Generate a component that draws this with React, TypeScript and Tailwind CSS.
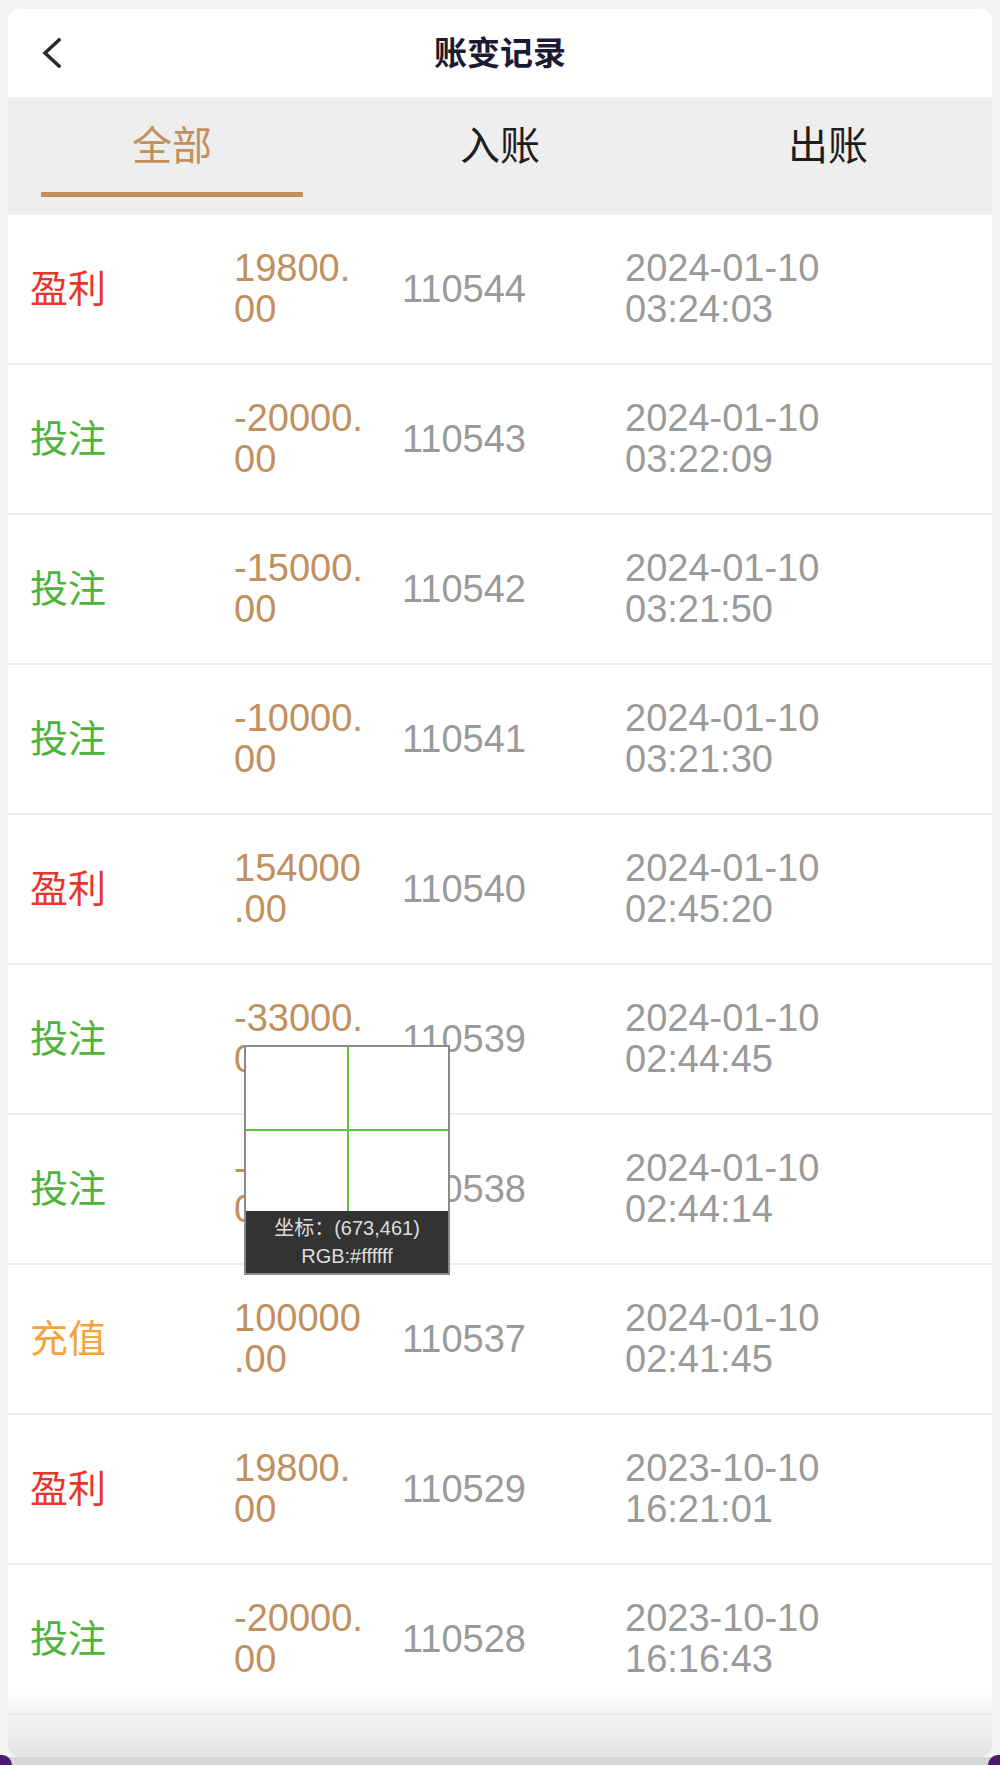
import React from "react";

type Record = {
	kind: string;
	amount: string;
	id: string;
	time: string;
};

const records: Record[] = [
	{ kind: "盈利", amount: "19800.00", id: "110544", time: "2024-01-10 03:24:03" },
	{ kind: "投注", amount: "-20000.00", id: "110543", time: "2024-01-10 03:22:09" },
	{ kind: "投注", amount: "-15000.00", id: "110542", time: "2024-01-10 03:21:50" },
	{ kind: "投注", amount: "-10000.00", id: "110541", time: "2024-01-10 03:21:30" },
	{ kind: "盈利", amount: "154000.00", id: "110540", time: "2024-01-10 02:45:20" },
	{ kind: "投注", amount: "-33000.00", id: "110539", time: "2024-01-10 02:44:45" },
	{ kind: "投注", amount: "-20000.00", id: "110538", time: "2024-01-10 02:44:14" },
	{ kind: "充值", amount: "100000.00", id: "110537", time: "2024-01-10 02:41:45" },
	{ kind: "盈利", amount: "19800.00", id: "110529", time: "2023-10-10 16:21:01" },
	{ kind: "投注", amount: "-20000.00", id: "110528", time: "2023-10-10 16:16:43" },
	{ kind: "盈利", amount: "200000.00", id: "110527", time: "2023-10-10 16:15:20" },
];

// colour per record type
const kindColor = (kind: string) => {
	switch (kind) {
		case "盈利":
			return "text-[#e8362b]";
		case "投注":
			return "text-[#4db33b]";
		case "充值":
			return "text-[#f2a43a]";
		default:
			return "text-[#333333]";
	}
};

const tabs = ["全部", "入账", "出账"];

const font = "font-['Liberation_Sans','Noto_Sans_CJK_SC',sans-serif]";

const App = () => {
	return (
		<div
			className={`relative w-full h-[1765px] overflow-hidden bg-[#f3f4f6] flex flex-col ${font}`}
		>
			{/* Card */}
			<div className="relative flex-1 mx-[8px] mt-[9px] bg-white rounded-t-[10px] rounded-b-[12px] overflow-hidden flex flex-col">
				{/* Header */}
				<div className="h-[88px] shrink-0 grid grid-cols-[1fr_auto_1fr] items-center">
					<div className="pl-[33px] flex items-center">
						<svg width="20" height="30" viewBox="0 0 20 30" fill="none">
							<polyline
								points="18,2 4,15 18,28"
								stroke="#2b2b2b"
								strokeWidth="3.5"
								strokeLinecap="square"
								strokeLinejoin="miter"
							/>
						</svg>
					</div>
					<div className="text-[33px] font-semibold text-[#1c1a33] leading-none">
						账变记录
					</div>
					<div />
				</div>

				{/* Tabs */}
				<div className="h-[118px] shrink-0 bg-[#eeeeee] grid grid-cols-3">
					{tabs.map((t, i) => (
						<div key={t} className="flex flex-col items-center pt-[25px]">
							<div
								className={`text-[40px] leading-[48px] ${
									i === 0 ? "text-[#c0905f]" : "text-[#1e1e1e]"
								}`}
							>
								{t}
							</div>
							{i === 0 && (
								<div className="mt-[22px] w-[262px] h-[5px] bg-[#c08f60]" />
							)}
						</div>
					))}
				</div>

				{/* List */}
				<div className="flex flex-col">
					{records.map((r, idx) => (
						<div
							key={idx}
							className="h-[150px] shrink-0 flex items-center border-b-2 border-[#ececec] text-[38px] leading-[41px]"
						>
							<div className={`w-[226px] pl-[22px] ${kindColor(r.kind)}`}>
								{r.kind}
							</div>
							<div className="w-[168px]">
								<div className="w-[132px] break-all [line-break:anywhere] text-[#c0905f]">
									{r.amount}
								</div>
							</div>
							<div className="w-[223px] text-[#9a9a9a]">{r.id}</div>
							<div className="flex flex-col text-[#9a9a9a]">
								{r.time.split(" ").map((p) => (
									<span key={p}>{p}</span>
								))}
							</div>
						</div>
					))}
				</div>

				{/* bottom fade */}
				<div className="pointer-events-none absolute bottom-0 inset-x-0 h-[70px] bg-gradient-to-b from-white/0 to-[#e3e3e3]" />
			</div>

			{/* window bottom edge */}
			<div className="h-[8px] shrink-0 bg-[#d7d7d7]" />
			<div className="absolute bottom-0 left-0 w-[12px] h-[10px] bg-[#4b1a6e] rounded-tr-[10px]" />
			<div className="absolute bottom-0 right-0 w-[12px] h-[10px] bg-[#4b1a6e] rounded-tl-[10px]" />

			{/* colour picker magnifier */}
			<div className="absolute left-[244px] top-[1045px] w-[206px] border-2 border-[#8a8a8a] bg-white">
				<div className="relative h-[164px]">
					<div className="absolute left-[101px] top-0 bottom-0 w-[2px] bg-[#5cc13f]" />
					<div className="absolute top-[82px] left-0 right-0 h-[2px] bg-[#5cc13f]" />
				</div>
				<div className="h-[62px] bg-[#333333] flex flex-col items-center justify-center text-[20px] leading-[28px] text-[#dddddd]">
					<span>坐标：(673,461)</span>
					<span>RGB:#ffffff</span>
				</div>
			</div>
		</div>
	);
};

export default App;
